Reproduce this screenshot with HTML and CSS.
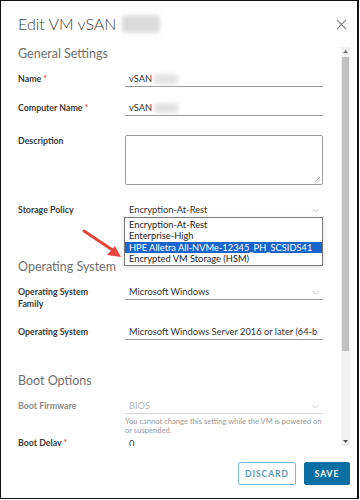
FILE: index.html
```html
<!DOCTYPE html>
<html>
<head>
<meta charset="utf-8">
<link rel="stylesheet" href="styles.css">
</head>
<body>
<div class="frame">
  <div class="header">
    <div class="title">Edit VM vSAN<span class="blur blur-title"></span></div>
    <svg class="close" width="11" height="11" viewBox="0 0 11 11"><path d="M1 1 L10 10 M10 1 L1 10" stroke="#8a8a8a" stroke-width="1.1" fill="none"/></svg>
  </div>
  <div class="main">
    <div class="content">
      <div class="section-title st-general">General Settings</div>
      <div class="row r-name">
        <div class="label">Name <span class="req">*</span></div>
        <div class="field">vSAN<span class="blur blur-input"></span></div>
      </div>
      <div class="row r-comp">
        <div class="label">Computer Name <span class="req">*</span></div>
        <div class="field">vSAN<span class="blur blur-input"></span></div>
      </div>
      <div class="row r-desc">
        <div class="label label-top">Description</div>
        <div class="textarea"><svg class="grip" width="7" height="7" viewBox="0 0 7 7"><path d="M6 1 L1 6 M6 3.5 L3.5 6" stroke="#999" stroke-width="0.8"/></svg></div>
      </div>
      <div class="row r-policy">
        <div class="label">Storage Policy</div>
        <div class="field select nounder">Encryption-At-Rest<svg class="chev" width="7" height="5" viewBox="0 0 7 5"><path d="M0.5 1 L3.5 4 L6.5 1" stroke="#aaa" stroke-width="0.8" fill="none"/></svg>
          <div class="dropdown">
            <div class="opt">Encryption-At-Rest</div>
            <div class="opt">Enterprise-High</div>
            <div class="opt sel">HPE Alletra All-NVMe-12345_PH_SCSIDS41</div>
            <div class="opt">Encrypted VM Storage (HSM)</div>
          </div>
        </div>
      </div>
      <div class="section-title st-os">Operating System</div>
      <div class="row r-family">
        <div class="label label-two">Operating System<br>Family</div>
        <div class="field select">Microsoft Windows<svg class="chev" width="7" height="5" viewBox="0 0 7 5"><path d="M0.5 1 L3.5 4 L6.5 1" stroke="#aaa" stroke-width="0.8" fill="none"/></svg></div>
      </div>
      <div class="row r-os">
        <div class="label">Operating System</div>
        <div class="field select">Microsoft Windows Server 2016 or later (64-b<svg class="chev" width="7" height="5" viewBox="0 0 7 5"><path d="M0.5 1 L3.5 4 L6.5 1" stroke="#aaa" stroke-width="0.8" fill="none"/></svg></div>
      </div>
      <div class="section-title st-boot">Boot Options</div>
      <div class="row r-firm">
        <div class="label disabled">Boot Firmware</div>
        <div class="fieldwrap">
          <div class="field select disabled-field">BIOS<svg class="chev" width="7" height="5" viewBox="0 0 7 5"><path d="M0.5 1 L3.5 4 L6.5 1" stroke="#bbb" stroke-width="0.8" fill="none"/></svg></div>
          <div class="help">You cannot change this setting while the VM is powered on or suspended.</div>
        </div>
      </div>
      <div class="row r-delay">
        <div class="label">Boot Delay <span class="req">*</span></div>
        <div class="field plain">0</div>
      </div>
      <svg class="arrow" width="50" height="36" viewBox="0 0 50 36"><path d="M4 4 L34 24" stroke="#e8453c" stroke-width="3" stroke-linecap="round"/><path d="M41 30 L27 28 L35 19 Z" fill="#e8453c"/></svg>
    </div>
    <div class="scroll">
      <div class="sb-btn"><svg width="5" height="3" viewBox="0 0 5 3"><path d="M0 3 L2.5 0 L5 3Z" fill="#777"/></svg></div>
      <div class="thumb"></div>
      <div class="sb-space"></div>
      <div class="sb-btn"><svg width="5" height="3" viewBox="0 0 5 3"><path d="M0 0 L2.5 3 L5 0Z" fill="#555"/></svg></div>
    </div>
  </div>
  <div class="footer">
    <button class="btn outline">DISCARD</button>
    <button class="btn solid">SAVE</button>
  </div>
</div>
</body>
</html>
```
FILE: styles.css
```css
html, body {
  margin: 0;
  padding: 0;
  background: #fff;
}
body {
  font-family: Lato, "Liberation Sans", sans-serif;
  color: #333;
}
.frame {
  box-sizing: border-box;
  width: 359px;
  height: 499px;
  border: 1px solid #111;
  border-right-width: 2px;
  display: flex;
  flex-direction: column;
  overflow: hidden;
}
.header {
  height: 46px;
  display: flex;
  align-items: flex-start;
  justify-content: space-between;
  padding: 0 10px 0 17px;
}
.title {
  margin-top: 13px;
  font-size: 16px;
  line-height: 20px;
  font-weight: 300;
  color: #404040;
  display: flex;
  align-items: center;
}
.blur {
  display: inline-block;
  background: #dcdcdc;
  filter: blur(2px);
  border-radius: 3px;
}
.blur-title {
  width: 38px;
  height: 18px;
  margin-left: 6px;
}
.blur-input {
  width: 24px;
  height: 10px;
  margin-left: 2px;
  background: #e2e2e2;
  vertical-align: middle;
}
.close {
  margin-top: 18px;
}
.main {
  height: 399px;
  display: flex;
}
.content {
  position: relative;
  flex: 1;
  padding-left: 17px;
  padding-right: 17px;
  overflow: hidden;
}
.section-title {
  font-size: 12.5px;
  line-height: 14px;
  color: #707070;
}
.st-general { margin-top: 0; }
.st-os { margin-top: 42px; }
.st-boot { margin-top: 34px; }
.row {
  display: grid;
  grid-template-columns: 107px 198px;
  align-items: start;
}
.r-name { margin-top: 10px; }
.r-comp { margin-top: 13px; }
.r-desc { margin-top: 19px; }
.r-policy { margin-top: 17px; }
.r-family { margin-top: 10px; }
.r-os { margin-top: 14px; }
.r-firm { margin-top: 10px; }
.r-delay { margin-top: 1px; }
.label {
  font-size: 8.8px;
  font-weight: 700;
  color: #3a3a3a;
  line-height: 15px;
}
.label-top {
  line-height: 11px;
  margin-top: 0;
}
.label-two {
  line-height: 12px;
  margin-top: 2px;
}
.label.disabled {
  color: #8a8a8a;
}
.req {
  color: #d0342c;
  font-weight: 400;
}
.field {
  position: relative;
  box-sizing: border-box;
  height: 16px;
  line-height: 15px;
  font-size: 9.3px;
  color: #333;
  padding-left: 4px;
  border-bottom: 1px solid #9a9a9a;
  white-space: nowrap;
  display: flex;
  align-items: center;
}
.field.plain {
  border-bottom: none;
}
.field.nounder {
  border-bottom-color: transparent;
}
.disabled-field {
  color: #b5b5b5;
  border-bottom-color: #d6d6d6;
}
.chev {
  position: absolute;
  right: 4px;
  top: 6px;
}
.textarea {
  position: relative;
  box-sizing: border-box;
  height: 50px;
  border: 1px solid #9a9a9a;
  border-radius: 2px;
}
.grip {
  position: absolute;
  right: 1px;
  bottom: 1px;
}
.dropdown {
  position: absolute;
  left: -1px;
  top: 15px;
  width: 199px;
  box-sizing: border-box;
  background: #fff;
  border: 1px solid #7a7a7a;
  box-shadow: 0 2px 6px rgba(0,0,0,0.12);
  padding: 1px 0;
  z-index: 5;
}
.opt {
  font-size: 9.3px;
  line-height: 11.3px;
  padding-left: 4px;
  color: #222;
}
.opt.sel {
  background: #1a64cc;
  color: #fff;
}
.fieldwrap {
  display: flex;
  flex-direction: column;
}
.help {
  font-size: 7.6px;
  line-height: 8.6px;
  color: #9a9a9a;
  padding-left: 0;
  margin-top: 3px;
}
.arrow {
  position: absolute;
  left: 79px;
  top: 180px;
  z-index: 6;
}
.scroll {
  width: 9px;
  margin-right: 7px;
  background: #f1f1f1;
  display: flex;
  flex-direction: column;
}
.sb-btn {
  height: 9px;
  display: flex;
  align-items: center;
  justify-content: center;
}
.thumb {
  height: 294px;
  margin: 1px 1px 0;
  background: #c1c1c1;
}
.sb-space {
  flex: 1;
}
.footer {
  display: flex;
  justify-content: flex-end;
  gap: 8px;
  padding-top: 16px;
  padding-right: 7px;
}
.btn {
  box-sizing: border-box;
  height: 23px;
  font-family: Lato, "Liberation Sans", sans-serif;
  font-size: 8.5px;
  font-weight: 700;
  letter-spacing: 1px;
  border-radius: 2px;
  padding: 0;
}
.btn.outline {
  width: 58px;
  background: #fff;
  border: 1px solid #7fb8d6;
  color: #5a98bd;
}
.btn.solid {
  width: 46px;
  background: #0a6fa3;
  border: 1px solid #0a6fa3;
  color: #fff;
}
```
